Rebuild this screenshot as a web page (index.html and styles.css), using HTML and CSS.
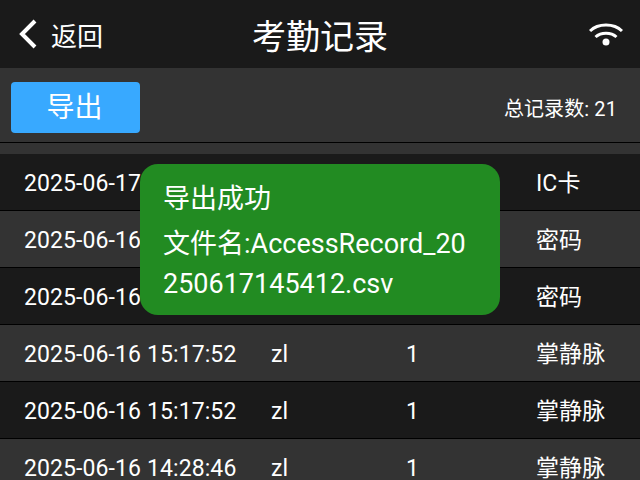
FILE: index.html
```html
<!DOCTYPE html>
<html lang="zh-CN">
<head>
    <meta charset="UTF-8">
    <title>考勤记录</title>
    <link rel="stylesheet" href="styles.css">
</head>
<body>
    <div class="screen">
        <div class="header">
            <div class="back">
                <svg class="back-icon" width="20" height="32" viewBox="0 0 20 32">
                    <path d="M17 3 L4 16 L17 29" fill="none" stroke="#fff" stroke-width="4"/>
                </svg>
                <span>返回</span>
            </div>
            <div class="title">考勤记录</div>
            <svg class="wifi" width="34" height="24" viewBox="0 0 34 24">
                <path d="M1 9 C9 1 25 1 33 9" fill="none" stroke="#fff" stroke-width="3"/>
                <path d="M6.5 15 C12 10 22 10 27.5 15" fill="none" stroke="#fff" stroke-width="3"/>
                <circle cx="17" cy="20" r="3.5" fill="#fff"/>
            </svg>
        </div>
        <div class="toolbar">
            <div class="export-btn">导出</div>
            <div class="total">总记录数: 21</div>
        </div>
        <div class="gap"></div>
        <div class="records">
            <div class="row"><span>2025-06-17 14:50:16</span><span>zl</span><span>1</span><span>IC卡</span></div>
            <div class="row alt"><span>2025-06-16 15:20:03</span><span>zl</span><span>1</span><span>密码</span></div>
            <div class="row"><span>2025-06-16 15:18:41</span><span>zl</span><span>1</span><span>密码</span></div>
            <div class="row alt"><span>2025-06-16 15:17:52</span><span>zl</span><span>1</span><span>掌静脉</span></div>
            <div class="row"><span>2025-06-16 15:17:52</span><span>zl</span><span>1</span><span>掌静脉</span></div>
            <div class="row alt"><span>2025-06-16 14:28:46</span><span>zl</span><span>1</span><span>掌静脉</span></div>
        </div>
        <div class="toast">
            <div class="toast-title">导出成功</div>
            <div>文件名:AccessRecord_20250617145412.csv</div>
        </div>
    </div>
</body>
</html>
```
FILE: styles.css
```css
html, body {
    margin: 0;
    padding: 0;
}

body {
    font-family: Roboto, "Noto Sans CJK SC", sans-serif;
    color: #fff;
    background: #1a1a1a;
}

.screen {
    position: relative;
    width: 640px;
    height: 480px;
    overflow: hidden;
}

.header {
    display: flex;
    align-items: center;
    justify-content: space-between;
    height: 68px;
    padding: 0 17px 0 18px;
    background: #1a1a1a;
    position: relative;
}

.back {
    display: flex;
    align-items: center;
    gap: 13px;
    font-size: 26px;
}

.title {
    position: absolute;
    left: 0;
    right: 0;
    text-align: center;
    font-size: 34px;
}

.toolbar {
    display: flex;
    align-items: center;
    justify-content: space-between;
    box-sizing: border-box;
    height: 75px;
    padding: 5px 23px 0 11px;
    background: #333;
    border-bottom: 1px solid #000;
}

.export-btn {
    box-sizing: border-box;
    width: 129px;
    height: 51px;
    padding-right: 2px;
    line-height: 51px;
    text-align: center;
    font-size: 28px;
    background: #38a9ff;
    border-radius: 4px;
}

.total {
    font-size: 20px;
    letter-spacing: 0.1px;
}

.gap {
    height: 11px;
    background: #333;
}

.row {
    display: grid;
    grid-template-columns: 247px 135px 130px 1fr;
    align-items: center;
    box-sizing: border-box;
    height: 57px;
    padding: 3px 0 0 24px;
    font-size: 23px;
    letter-spacing: 0.1px;
    line-height: 30px;
    background: #1a1a1a;
    border-bottom: 1px solid #000;
}

.row.alt {
    background: #333;
}

.toast {
    position: absolute;
    left: 140px;
    top: 164px;
    width: 312px;
    padding: 15px 25px 11px 23px;
    font-size: 27px;
    line-height: 40px;
    background: #228b22;
    border-radius: 18px;
    word-break: break-all;
}

.toast-title {
    margin-bottom: 5px;
}
```
